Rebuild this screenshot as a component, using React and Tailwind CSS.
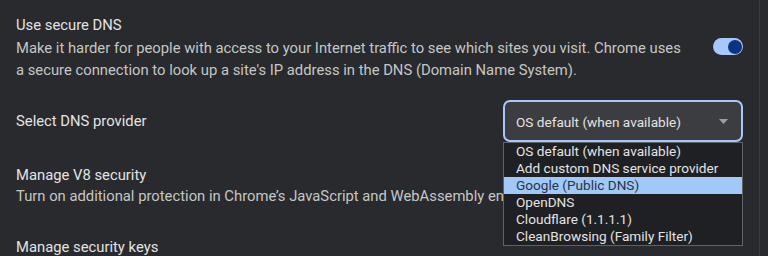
import React from "react";

const options = [
  "OS default (when available)",
  "Add custom DNS service provider",
  "Google (Public DNS)",
  "OpenDNS",
  "Cloudflare (1.1.1.1)",
  "CleanBrowsing (Family Filter)",
];

export default function App() {
  return (
    <div
      className="w-[768px] h-[256px] overflow-hidden bg-[#292a2d] flex"
      style={{ fontFamily: "Roboto, 'Liberation Sans', sans-serif" }}
    >
      <div className="w-[760px] border-r border-[#3a3b3e] flex flex-col">
        {/* Use secure DNS */}
        <div className="flex items-center pl-4 pr-4 pt-[15px]">
          <div className="flex-1">
            <div className="text-[14.8px] leading-[21px] text-[#e3e3e3]">Use secure DNS</div>
            <div className="mt-[2px] text-[14.8px] leading-[21.5px] text-[#c4c7c5]">
              Make it harder for people with access to your Internet traffic to see which sites you visit. Chrome uses
              <br />
              a secure connection to look up a site's IP address in the DNS (Domain Name System).
            </div>
          </div>
          <div className="relative w-[30px] h-[17px] rounded-full bg-[#a8c7fa] -mt-[3px]">
            <div className="absolute right-[1.5px] top-[1.5px] w-[14px] h-[14px] rounded-full bg-[#0a3585]" />
          </div>
        </div>

        {/* Select DNS provider */}
        <div className="flex items-center pl-4 pr-4 mt-[19px] h-[42px]">
          <div className="flex-1 text-[14.8px] text-[#e3e3e3]">Select DNS provider</div>
          <div className="relative w-[240px] h-[42px]">
            <div className="w-full h-full rounded-[7px] border-2 border-[#a8c7fa] bg-[#3c3d40] flex items-center pl-[11px] pr-[12px]">
              <span className="flex-1 text-[13.6px] text-[#e3e3e3] pt-[2px]">OS default (when available)</span>
              <svg width="9" height="5" viewBox="0 0 9 5" className="mr-[1px]">
                <path d="M0 0 L9 0 L4.5 5 Z" fill="#9aa0a6" />
              </svg>
            </div>
            <div className="absolute left-0 top-[42px] w-[240px] bg-[#1f2023] border border-[#5f6368] z-10">
              {options.map((o, i) => (
                <div
                  key={o}
                  className={
                    i === 2
                      ? "h-[17px] leading-[17px] pl-[12px] text-[13.6px] bg-[#a0c8f8] text-[#2a3442]"
                      : "h-[17px] leading-[17px] pl-[12px] text-[13.6px] text-[#e3e3e3]"
                  }
                >
                  {o}
                </div>
              ))}
            </div>
          </div>
        </div>

        <div className="mt-[6px] h-px bg-[#3c3d40]" />

        {/* Manage V8 security */}
        <div className="pl-4 pt-[17px] pb-[15px]">
          <div className="text-[14.8px] leading-[21px] text-[#e3e3e3]">Manage V8 security</div>
          <div className="text-[14.8px] leading-[21px] text-[#c4c7c5]">
            Turn on additional protection in Chrome’s JavaScript and WebAssembly engine
          </div>
        </div>

        <div className="h-px bg-[#3c3d40]" />

        <div className="pl-4 pt-[15px]">
          <div className="text-[14.8px] leading-[21px] text-[#e3e3e3]">Manage security keys</div>
        </div>
      </div>
    </div>
  );
}
